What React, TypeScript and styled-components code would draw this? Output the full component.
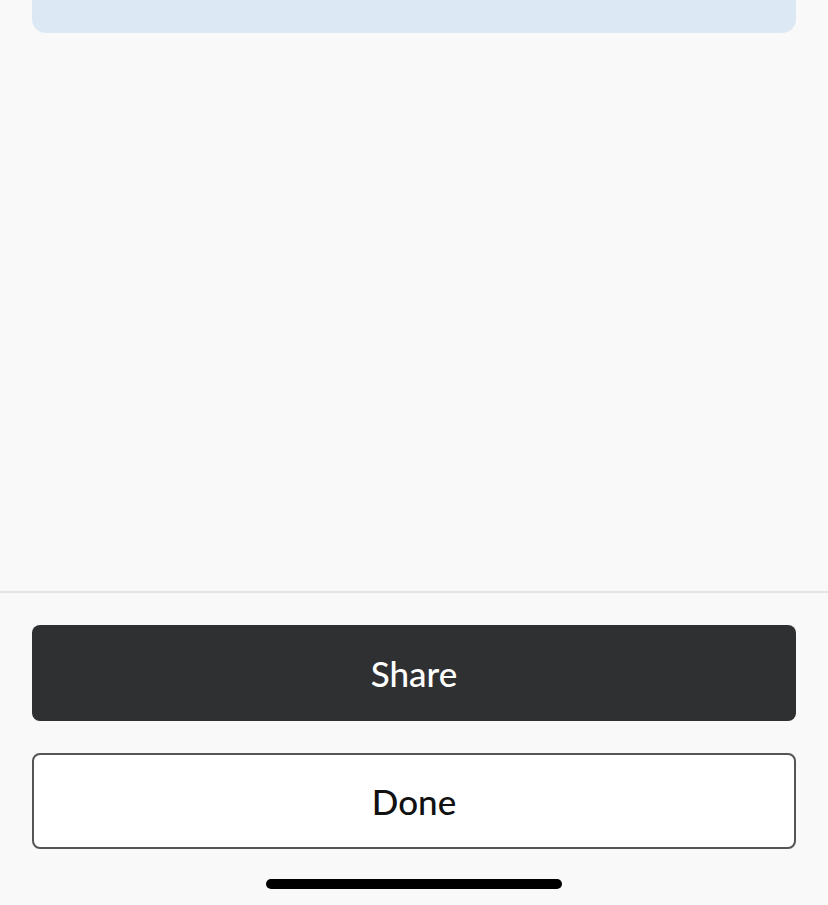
import styled, {createGlobalStyle} from "styled-components";

const GlobalStyle = createGlobalStyle`
  html, body {
    margin: 0;
    padding: 0;
    background: #f9f9f9;
    font-family: Lato, "Noto Sans", sans-serif;
  }
`;

const Screen = styled.div`
  width: 828px;
  height: 905px;
  display: flex;
  flex-direction: column;
  background: #f9f9f9;
  overflow: hidden;
`;

const Content = styled.div`
  flex: 1;
  padding: 0 32px;
`;

const InfoCard = styled.div`
  height: 33px;
  background: #dce8f4;
  border-radius: 0 0 14px 14px;
`;

const Footer = styled.div`
  border-top: 2px solid #e4e4e4;
  padding: 32px 32px 16px;
  display: flex;
  flex-direction: column;
  gap: 32px;
`;

const Button = styled.button<{$primary?: boolean}>`
  height: 96px;
  width: 100%;
  box-sizing: border-box;
  border-radius: 8px;
  font-family: Lato, "Noto Sans", sans-serif;
  font-size: 35px;
  font-weight: 500;
  cursor: pointer;
  background: ${p => p.$primary ? "#2f3032" : "#ffffff"};
  color: ${p => p.$primary ? "#ffffff" : "#111111"};
  border: ${p => p.$primary ? "none" : "2px solid #555555"};
`;

const HomeBar = styled.div`
  width: 296px;
  height: 10px;
  border-radius: 5px;
  background: #000;
  align-self: center;
  margin-top: -2px;
`;

export default function App() {
    return (
        <>
            <GlobalStyle />
            <Screen>
                <Content>
                    <InfoCard />
                </Content>
                <Footer>
                    <Button $primary>Share</Button>
                    <Button>Done</Button>
                    <HomeBar />
                </Footer>
            </Screen>
        </>
    )
}
